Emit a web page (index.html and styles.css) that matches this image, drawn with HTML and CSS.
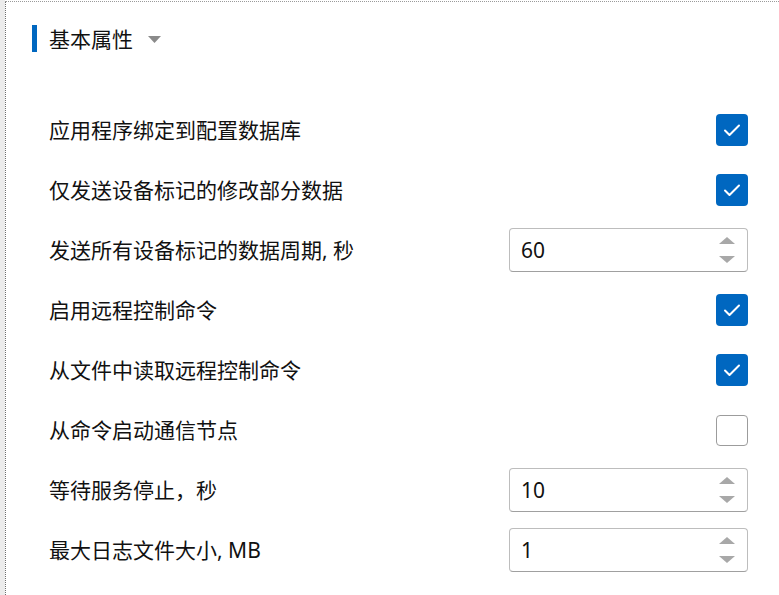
FILE: index.html
```html
<!DOCTYPE html>
<html lang="zh">
<head>
<meta charset="utf-8">
<link rel="stylesheet" href="styles.css">
</head>
<body>
<div class="frame">
  <div class="strip"></div>
  <div class="panel">
    <div class="header">
      <span class="bar"></span>
      <span class="title">基本属性</span>
      <svg class="caret" width="13" height="7" viewBox="0 0 13 7"><path d="M0 0H13L6.5 7Z" fill="#8a8a8a"/></svg>
    </div>
    <div class="rows">
      <div class="row">
        <span class="label">应用程序绑定到配置数据库</span>
        <span class="check on"><svg width="32" height="32" viewBox="0 0 32 32"><path d="M9 16.5L13.5 21L23 11.5" fill="none" stroke="#fff" stroke-width="2" stroke-linecap="round" stroke-linejoin="round"/></svg></span>
      </div>
      <div class="row">
        <span class="label">仅发送设备标记的修改部分数据</span>
        <span class="check on"><svg width="32" height="32" viewBox="0 0 32 32"><path d="M9 16.5L13.5 21L23 11.5" fill="none" stroke="#fff" stroke-width="2" stroke-linecap="round" stroke-linejoin="round"/></svg></span>
      </div>
      <div class="row">
        <span class="label">发送所有设备标记的数据周期, 秒</span>
        <span class="spin"><span class="value">60</span><span class="arrows"><svg width="16" height="7" viewBox="0 0 16 7"><path d="M0 7L8 0L16 7Z" fill="#a8a8a8"/></svg><svg width="16" height="7" viewBox="0 0 16 7"><path d="M0 0H16L8 7Z" fill="#a8a8a8"/></svg></span></span>
      </div>
      <div class="row">
        <span class="label">启用远程控制命令</span>
        <span class="check on"><svg width="32" height="32" viewBox="0 0 32 32"><path d="M9 16.5L13.5 21L23 11.5" fill="none" stroke="#fff" stroke-width="2" stroke-linecap="round" stroke-linejoin="round"/></svg></span>
      </div>
      <div class="row">
        <span class="label">从文件中读取远程控制命令</span>
        <span class="check on"><svg width="32" height="32" viewBox="0 0 32 32"><path d="M9 16.5L13.5 21L23 11.5" fill="none" stroke="#fff" stroke-width="2" stroke-linecap="round" stroke-linejoin="round"/></svg></span>
      </div>
      <div class="row">
        <span class="label">从命令启动通信节点</span>
        <span class="check off"></span>
      </div>
      <div class="row">
        <span class="label">等待服务停止，秒</span>
        <span class="spin"><span class="value">10</span><span class="arrows"><svg width="16" height="7" viewBox="0 0 16 7"><path d="M0 7L8 0L16 7Z" fill="#a8a8a8"/></svg><svg width="16" height="7" viewBox="0 0 16 7"><path d="M0 0H16L8 7Z" fill="#a8a8a8"/></svg></span></span>
      </div>
      <div class="row">
        <span class="label">最大日志文件大小, MB</span>
        <span class="spin"><span class="value">1</span><span class="arrows"><svg width="16" height="7" viewBox="0 0 16 7"><path d="M0 7L8 0L16 7Z" fill="#a8a8a8"/></svg><svg width="16" height="7" viewBox="0 0 16 7"><path d="M0 0H16L8 7Z" fill="#a8a8a8"/></svg></span></span>
      </div>
    </div>
  </div>
</div>
</body>
</html>
```
FILE: styles.css
```css
html, body {
  margin: 0;
  padding: 0;
  background: #fff;
  height: 100%;
  overflow: hidden;
}
body {
  font-family: "Noto Sans", "Noto Sans CJK SC", sans-serif;
  color: #111;
}
.frame {
  display: flex;
  height: 595px;
}
.strip {
  width: 5px;
  background: #ececec;
  flex: none;
}
.panel {
  flex: 1;
  margin-top: 1px;
  border-left: 1px dotted #6e6e6e;
  border-top: 1px dotted #9a9a9a;
  padding: 23px 31px 0 43px;
}
.header {
  display: flex;
  align-items: center;
  height: 27px;
  margin-left: -17px;
  margin-bottom: 48px;
}
.bar {
  width: 5px;
  height: 27px;
  background: #0067c0;
  margin-right: 12px;
}
.title {
  font-size: 21px;
  line-height: 27px;
  margin-top: 2px;
}
.caret {
  margin-left: 15px;
  margin-top: 1px;
}
.row {
  display: flex;
  align-items: center;
  justify-content: space-between;
  height: 60px;
}
.label {
  font-size: 21px;
  line-height: 28px;
}
.check {
  width: 32px;
  height: 32px;
  box-sizing: border-box;
  border-radius: 4px;
  display: flex;
}
.check.on {
  background: #0067c0;
}
.check.off {
  border: 1.5px solid #9c9c9c;
  width: 32px;
  height: 31px;
}
.spin {
  width: 239px;
  height: 44px;
  box-sizing: border-box;
  border: 1px solid #bdbdbd;
  border-bottom-color: #a0a0a0;
  border-radius: 4px;
  display: flex;
  align-items: center;
  justify-content: space-between;
  padding: 0 12px 0 11px;
}
.value {
  font-size: 21px;
  line-height: 28px;
}
.arrows {
  display: flex;
  flex-direction: column;
  gap: 12px;
}
.arrows svg {
  display: block;
}
```
